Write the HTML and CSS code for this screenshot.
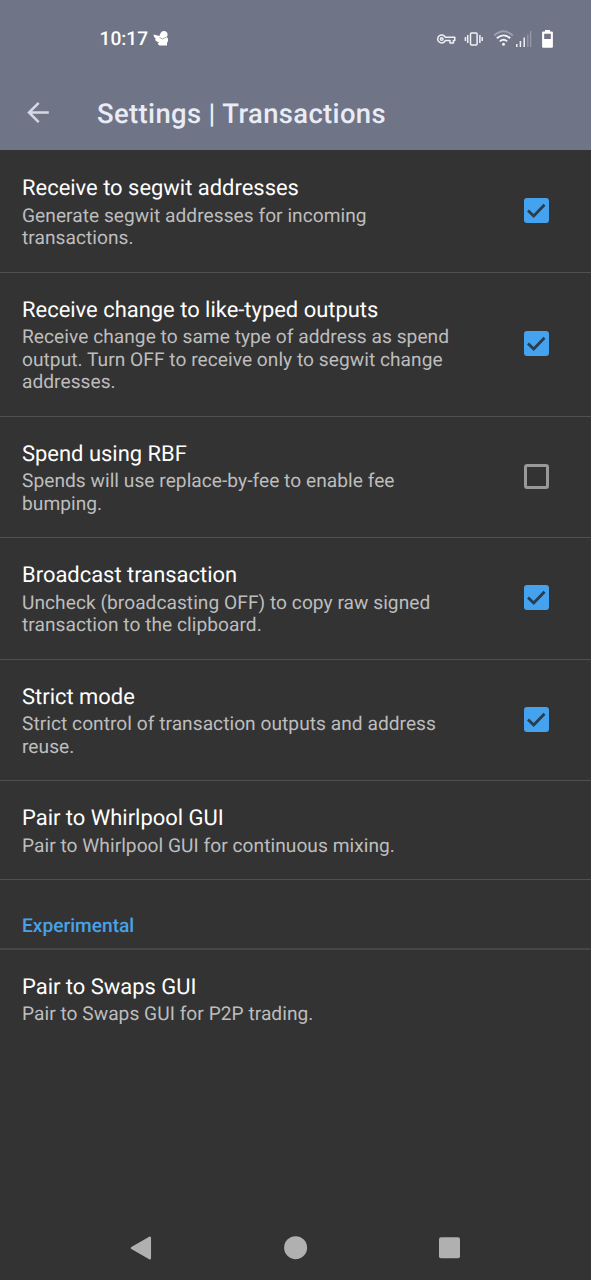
FILE: index.html
```html
<!DOCTYPE html>
<html lang="en">
<head>
<meta charset="utf-8">
<title>Settings | Transactions</title>
<link rel="stylesheet" href="styles.css">
</head>
<body>
<div class="screen">
  <header class="header">
    <div class="status">
      <span class="clock">10:17</span>
      <svg class="bird" width="16" height="17" viewBox="0 0 16 17"><path fill="#fff" d="M.5 4.500 6.500 6C7 3 8.500 1 11 1c2 0 3.600 1.500 3.600 3.500 0 1-.3 1.800-.9 2.500 1.100.8 1.600 2.200 1.300 4L14 13v2.500H6.500L4.500 13.800 6 12.200C4 12 2.500 11 2 9.300L3.200 9C1.700 8 .7 6.500.5 4.500z"/><path d="M6.500 7.500 9.500 9l4-2" fill="none" stroke="#6f7487" stroke-width=".6"/></svg>
      <svg class="indicators" width="120" height="22" viewBox="0 0 120 22">
        <g fill="none" stroke="#f0f1f7" stroke-width="1.500" stroke-linejoin="round">
          <path d="M9.300 9.200H18.800V12.600H17.400V15H14V12.600H9.300A4 4 0 1 1 9.300 9.200z"/>
          <circle cx="5.700" cy="11" r="1.300"/>
          <rect x="34.500" y="5" width="6.600" height="12" rx="1"/>
          <path d="M31.700 7v8M29.400 9v4M43.900 7v8M46.200 9v4"/>
        </g>
        <g fill="none" stroke="#f0f1f7" stroke-width="1.800">
          <path d="M58.200 7.500Q67.500-1 76.800 7.500" stroke="#9da1b0"/>
          <path d="M60.800 10.200Q67.500 4.500 74.200 10.200M63.800 13.400Q67.500 10.200 71.200 13.400"/>
        </g>
        <circle cx="67.500" cy="16.300" r="1.500" fill="#f0f1f7"/>
        <path d="M80.800 16v3M84.400 13v6M88.200 9.500V19" stroke="#f0f1f7" stroke-width="1.500"/>
        <path d="M91.800 6.500V19M94.600 3v16" stroke="#9599a9" stroke-width="1.300"/>
        <path fill="#fff" fill-rule="evenodd" d="M109 2h5v1.400h1.900q1 0 1 1V18.700q0 1-1 1h-8.800q-1 0-1-1V4.400q0-1 1-1H109zM108.200 5.700v5.300h6.600V5.700z"/>
      </svg>
    </div>
    <div class="appbar">
      <svg class="back" width="24" height="24" viewBox="0 0 24 24"><path d="M22.800 11.500H2.500M12.700 1.800 3 11.500l9.700 9.700" fill="none" stroke="#d6d8e4" stroke-width="2.500"/></svg>
      <h1 class="heading">Settings | Transactions</h1>
    </div>
  </header>
  <main class="list">
    <section class="item"><div class="copy"><h2 class="title">Receive to segwit addresses</h2><p class="desc">Generate segwit addresses for incoming<br>transactions.</p></div><span class="check on"><svg width="25" height="25" viewBox="0 0 25 25"><path d="M4 12.500 9.700 18 20.500 6.800"/></svg></span></section>
    <section class="item"><div class="copy"><h2 class="title">Receive change to like-typed outputs</h2><p class="desc">Receive change to same type of address as spend<br>output. Turn OFF to receive only to segwit change<br>addresses.</p></div><span class="check on"><svg width="25" height="25" viewBox="0 0 25 25"><path d="M4 12.500 9.700 18 20.500 6.800"/></svg></span></section>
    <section class="item"><div class="copy"><h2 class="title">Spend using RBF</h2><p class="desc">Spends will use replace-by-fee to enable fee<br>bumping.</p></div><span class="check"></span></section>
    <section class="item"><div class="copy"><h2 class="title">Broadcast transaction</h2><p class="desc">Uncheck (broadcasting OFF) to copy raw signed<br>transaction to the clipboard.</p></div><span class="check on"><svg width="25" height="25" viewBox="0 0 25 25"><path d="M4 12.500 9.700 18 20.500 6.800"/></svg></span></section>
    <section class="item"><div class="copy"><h2 class="title">Strict mode</h2><p class="desc">Strict control of transaction outputs and address<br>reuse.</p></div><span class="check on"><svg width="25" height="25" viewBox="0 0 25 25"><path d="M4 12.500 9.700 18 20.500 6.800"/></svg></span></section>
    <section class="item"><div class="copy"><h2 class="title">Pair to Whirlpool GUI</h2><p class="desc">Pair to Whirlpool GUI for continuous mixing.</p></div></section>
    <h3 class="category">Experimental</h3>
    <section class="item last"><div class="copy"><h2 class="title">Pair to Swaps GUI</h2><p class="desc">Pair to Swaps GUI for P2P trading.</p></div></section>
  </main>
  <nav class="navbar">
    <svg width="24" height="24" viewBox="0 0 24 24"><path d="M3 12 20.800 1.800V22.200z" fill="#b0b0b0" stroke="#b0b0b0" stroke-width="2.500" stroke-linejoin="round"/></svg>
    <svg width="24" height="24" viewBox="0 0 24 24"><circle cx="11.600" cy="11.700" r="11.500" fill="#b0b0b0"/></svg>
    <svg width="24" height="24" viewBox="0 0 24 24"><rect x="1" y="1.300" width="21" height="21" rx="2" fill="#b0b0b0"/></svg>
  </nav>
</div>
</body>
</html>
```
FILE: styles.css
```css
* { box-sizing: border-box; }
body { margin: 0; background: #333; font-family: Roboto, sans-serif; }
h1, h2, h3, p { margin: 0; }
svg { display: block; flex: none; }
.screen { width: 591px; height: 1280px; display: flex; flex-direction: column; overflow: hidden; background: #333; text-rendering: geometricPrecision; }
.header { height: 150.300px; flex: none; background: #6f7487; }
.status { height: 77px; padding: 0 35px 0 99.500px; display: flex; align-items: center; }
.clock { color: #fff; font-size: 19.150px; font-weight: 500; line-height: 22px; }
.bird { margin-left: 5px; }
.indicators { margin-left: auto; }
.appbar { height: 74px; padding-left: 26px; display: flex; align-items: center; }
.back { margin-top: -2px; }
.heading { margin-left: 47px; color: #eaecf5; font-size: 27.400px; line-height: 32px; font-weight: 500; letter-spacing: 0.380px; white-space: nowrap; }
.list { flex: 1; padding-top: 1px; }
.item { display: flex; justify-content: space-between; padding: 25.200px 42px 22.100px 22px; border-bottom: 1px solid #505050; align-items: center; }
.item.last { border-bottom: 0; }
.title { color: #fff; font-size: 21.950px; line-height: 25.700px; font-weight: 400; white-space: nowrap; }
.desc { margin-top: 2.600px; color: #bdbdbd; font-size: 19.150px; line-height: 22.450px; letter-spacing: 0.040px; white-space: nowrap; }
.check { width: 25px; height: 25px; flex: none; margin-bottom: 4.200px; border: 3px solid #999; border-radius: 3px; }
.check.on { border: 0; background: #45a2ee; }
.check path { fill: none; stroke: #293d4c; stroke-width: 2.800; }
.category { height: 69.500px; padding: 34px 22px 0; border-bottom: 2px solid #454545; color: #4aa1e8; font-size: 19.150px; line-height: 24px; font-weight: 500; }
.navbar { height: 65px; flex: none; padding: 0 129px; display: flex; justify-content: space-between; align-items: center; }
```
